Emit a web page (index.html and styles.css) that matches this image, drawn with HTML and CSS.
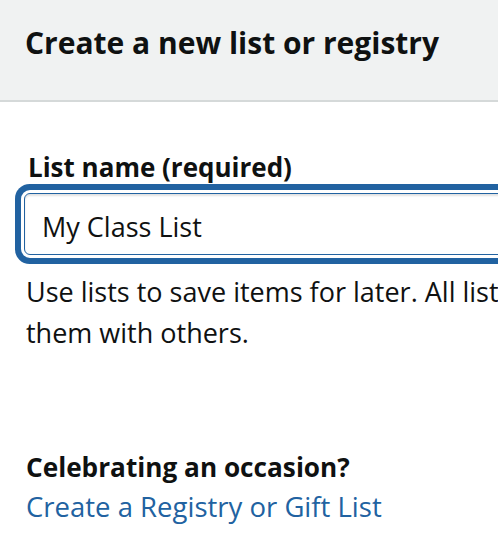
FILE: index.html
```html
<!DOCTYPE html>
<html lang="en">
<head>
<meta charset="utf-8">
<title>Create a new list or registry</title>
<link rel="stylesheet" href="styles.css">
</head>
<body>
<div class="popover">
  <header class="popover-header">
    <h1 class="popover-title">Create a new list or registry</h1>
  </header>
  <main class="popover-body">
    <form class="list-form">
      <label class="form-label" for="list-name">List name (required)</label>
      <input class="text-input" id="list-name" type="text" value="My Class List">
      <p class="help-text">Use lists to save items for later. All lists are private unless you share<br>them with others.</p>
    </form>
    <section class="occasion">
      <h2 class="occasion-title">Celebrating an occasion?</h2>
      <a class="occasion-link" href="#">Create a Registry or Gift List</a>
    </section>
  </main>
</div>
</body>
</html>
```
FILE: styles.css
```css
html, body {
  margin: 0;
  padding: 0;
  overflow: hidden;
  background: #fff;
}
body {
  font-family: "Open Sans", "Noto Sans", sans-serif;
  color: #0f1111;
}
.popover {
  width: 1100px;
}
.popover-header {
  box-sizing: content-box;
  height: 77px;
  padding: 23px 25px 0;
  background: #f0f2f2;
  border-bottom: 2px solid #d5d9d9;
}
.popover-title {
  margin: 0;
  font-size: 30px;
  line-height: 40px;
  font-weight: 700;
}
.popover-body {
  padding: 49px 24px 0;
}
.list-form {
  display: flex;
  flex-direction: column;
  align-items: flex-start;
}
.form-label {
  font-size: 26px;
  line-height: 32px;
  font-weight: 700;
  padding-left: 4px;
  margin-bottom: 10px;
}
.text-input {
  box-sizing: border-box;
  width: 1000px;
  height: 62px;
  margin: 0;
  padding: 5px 17px 0;
  font-family: inherit;
  font-size: 27px;
  color: #0f1111;
  background: #fff;
  border: 1px solid #2162a1;
  border-radius: 6px;
  outline: none;
  box-shadow: inset 0 2px 2px rgba(15, 17, 17, 0.12), 0 0 0 3px #fff, 0 0 0 9px #2162a1;
}
.help-text {
  margin: 16px 0 0;
  padding-left: 2px;
  font-size: 27px;
  line-height: 41px;
}
.occasion {
  margin-top: 94px;
  padding-left: 2px;
  display: flex;
  flex-direction: column;
  align-items: flex-start;
}
.occasion-title {
  margin: 0;
  font-size: 26.2px;
  line-height: 40px;
  font-weight: 700;
}
.occasion-link {
  font-size: 27.5px;
  line-height: 40px;
  color: #2162a1;
  text-decoration: none;
}
```
